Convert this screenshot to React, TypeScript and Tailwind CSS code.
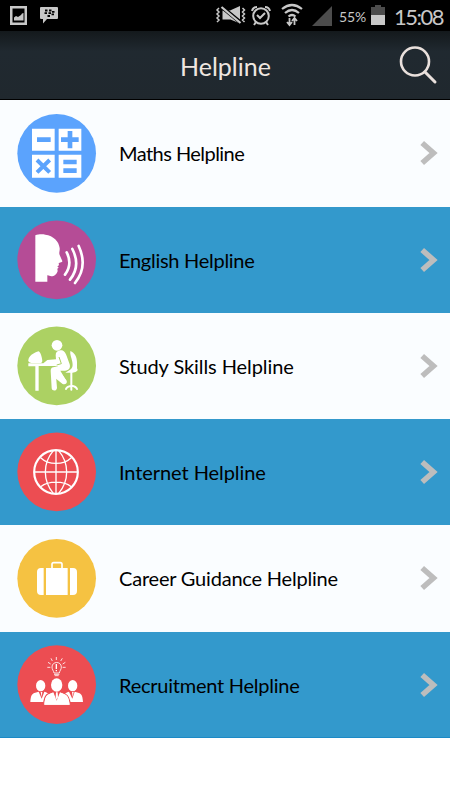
import React from "react";

type Row = {
  label: string;
  text: string;
  row: string;
  disc: string;
  art: React.ReactNode;
};

const maths = (
  <g>
    <path fill="#fff" d="M66 71h68v66H66zM146 71h68v66h-68zM66 149h68v69H66zM146 149h68v69h-68z" />
    <path stroke="#5ba3fd" strokeWidth="14" d="M81 104h41M153 104h53M180 78v52M160 171h40M160 197h40" />
    <path stroke="#5ba3fd" strokeWidth="12" d="M81 165l38 37M119 165l-38 37" />
  </g>
);

const english = (
  <g>
    <path
      fill="#fff"
      d="M76 70C84 67 96 66 106 68C130 71 147 88 149 108C150 118 146 122 149 129L157 147C158 151 150 151 146 153L147 160L142 163L146 167L142 170L143 177C141 186 133 193 124 193C119 192 115 189 112 190V209H76z"
    />
    <path
      fill="none"
      stroke="#fff"
      strokeWidth="8"
      strokeLinecap="round"
      d="M170 121C182 144 180 168 165 188M187 111C205 146 202 176 180 203M206 102C225 143 221 181 195 213"
    />
  </g>
);

const study = (
  <g fill="#fff">
    <circle cx="141" cy="82" r="16" />
    <path d="M55 127C55 114 73 103 86 100C91 102 96 116 97 130L94 135H64C57 134 55 132 55 127z" />
    <path d="M55 136H100L112 126L138 124L137 112C137 102 143 98 150 97C161 95 166 103 170 114L179 139C182 149 177 158 165 158H151L168 187C171 194 163 199 158 196L138 174L141 210C140 220 126 220 125 211L122 158C122 150 127 147 134 147L145 144H86V218H76V145H55z" />
    <path d="M181 99C194 104 201 117 201 132V151L203 155C202 161 193 164 184 164H166L178 157C188 151 189 144 187 132C185 120 179 109 181 99z" />
    <path d="M138 166L150 162L170 188C173 196 164 202 157 197L138 182z" />
    <path
      fill="none"
      stroke="#fff"
      strokeWidth="6"
      strokeLinecap="round"
      d="M184 160V215M168 213C170 206 179 204 184 203C192 204 199 207 201 213"
    />
    <path fill="none" stroke="#acd163" strokeWidth="3" d="M147 117L154 137L140 141" />
  </g>
);

const globe = (
  <g fill="none" stroke="#fff" strokeWidth="4">
    <circle cx="138" cy="144" r="65.500" strokeWidth="6.500" />
    <path d="M138 80v128M74 144h128M92 101C116 124 160 124 184 101M92 188C116 170 160 170 184 188" />
    <path d="M130 80C98 118 98 170 130 208M146 80C178 118 178 170 146 208" />
  </g>
);

const suitcase = (
  <g fill="#fff">
    <path d="M101 114v81h-8Q81 195 81 183V126Q81 114 93 114zM108 114h65v81h-65zM180 114h9q12 0 12 12v57q0 12-12 12h-9z" />
    <path fill="none" stroke="#fff" strokeWidth="5" d="M126 116V103q0-5 5-5h20q5 0 5 5v13" />
  </g>
);

const recruitment = (
  <g fill="#fff">
    <ellipse cx="92" cy="149" rx="14" ry="17" />
    <ellipse cx="188" cy="149" rx="14" ry="17" />
    <path d="M61 198C62 183 64 174 73 171L86 167L95 188L103 167C110 169 115 171 117 176L106 198zM219 198C218 183 216 174 207 171L194 167L187 188L177 167C170 169 165 171 163 176L174 198z" />
    <path
      stroke="#ec4d52"
      strokeWidth="4"
      d="M101 208C102 187 106 177 115 174L130 167L140 194L150 167L165 174C175 178 179 187 181 208z"
    />
    <path d="M103 206C104 187 108 178 116 175L130 169L140 194L150 169L164 175C173 178 177 187 179 206z" />
    <ellipse cx="140" cy="147" rx="17" ry="20" />
    <path d="M92 168h5l-2 15zM186 168h5l-3 15zM138 169h5l1 15-4 8-3-8z" />
    <path
      fill="none"
      stroke="#fff"
      strokeWidth="2.500"
      d="M132 111C131 104 126 101 126 93C126 75 154 75 154 93C154 101 149 104 148 111zM132 115h16M134 119h12M139 63v9M123 67l4 8M157 67l-5 8M114 79l8 5M166 79l-8 5M112 94h9M158 94h9"
    />
    <path stroke="#fff" strokeWidth="4" d="M139 84v15M139 102v4" />
  </g>
);

const rows: Row[] = [
  { label: "Maths Helpline", text: "tracking-[-0.55px]", row: "h-[107px] bg-[#fafdff]", disc: "#5ba3fd", art: maths },
  { label: "English Helpline", text: "tracking-[-0.28px]", row: "h-[106px] bg-[#3399cc]", disc: "#b54c96", art: english },
  { label: "Study Skills Helpline", text: "tracking-[-0.08px]", row: "h-[106px] bg-[#fafdff]", disc: "#acd163", art: study },
  { label: "Internet Helpline", text: "tracking-[-0.08px]", row: "h-[106px] bg-[#3399cc]", disc: "#ec4d52", art: globe },
  { label: "Career Guidance Helpline", text: "tracking-[-0.2px]", row: "h-[107px] bg-[#fafdff]", disc: "#f5c242", art: suitcase },
  { label: "Recruitment Helpline", text: "tracking-[-0.24px]", row: "h-[106px] border-b border-[#1c8ac6] bg-[#3399cc]", disc: "#ec4d52", art: recruitment },
];

function StatusBar() {
  return (
    <div className="flex h-[31px] items-center bg-black text-[#c8c8c8]">
      <svg className="ml-[10px] h-[19px] w-[17px]" viewBox="0 0 17 19">
        <path fill="#c8c8c8" fillRule="evenodd" d="M0 0h17v19H0zM2.500 2.500v14h12v-14z" />
        <path fill="#c8c8c8" d="M4 14.500V11.500l2-1.500 2 1 3-2 1-1.500 1.500-.5v7.500z" />
      </svg>
      <svg className="ml-[13px] h-[17px] w-[18px]" viewBox="0 0 18 17">
        <path fill="#c8c8c8" d="M1 0h16q1 0 1 1v10q0 1-1 1H7l-4 4.500V12H1q-1 0-1-1V1q0-1 1-1z" />
        <path
          stroke="#000"
          strokeWidth="1.800"
          d="M5 3.500h2.500M9 3.500h2.500M4.500 6.200h2.500M8.500 6.200h2.500M12 4.800h2.500M11.500 7.300h2.500M7.500 9h2.500"
        />
      </svg>
      <svg className="ml-auto h-[31px] w-[138px]" viewBox="200 0 138 31" fill="none" stroke="#c8c8c8">
        <path fill="#c8c8c8" stroke="none" d="M222.500 10.500h7.500l10-4.500v17.500l-9.500-4H222.500z" />
        <path stroke="#000" strokeWidth="4" d="M220 5.500l23 19" />
        <path strokeWidth="2.200" d="M221.500 7l19 16" />
        <path strokeWidth="1.500" d="M219 8l-2 2 2 2-2 2 2 2-2 2 2 2-2 2M242.500 8l2 2-2 2 2 2-2 2 2 2-2 2 2 2" />
        <circle cx="261" cy="16" r="7.800" strokeWidth="2" />
        <path strokeWidth="2" d="M257 15l3 3 5-5M256 22l-2 3M266 22l2 3M252 11q1-4 5-4M270 11q-1-4-5-4" />
        <path strokeWidth="2.200" d="M282 9q10-8 20 0M285 13q7-6 14 0M288.500 16.500q3.500-3 7 0" />
        <path strokeWidth="1.800" d="M289.500 18v7M294.500 25v-6M287 22l2.500 3 2.500-3M292 21l2.500-3 2.500 3" />
        <path fill="#4c4c4c" stroke="none" d="M332 6v20h-20z" />
      </svg>
      <span className="mt-[3px] w-[33px] pl-px text-[14px] leading-[20px] tracking-[-0.1px]">55%</span>
      <svg className="h-[31px] w-[14px]" viewBox="371 0 14 31">
        <path fill="#4c4c4c" d="M371 7h4V5h6v2h4v9h-14z" />
        <path fill="#c8c8c8" d="M371 15h14v10h-14z" />
      </svg>
      <span className="mt-[3px] w-[65px] pl-[9px] text-[22px] leading-[26px] tracking-[-1.5px] whitespace-nowrap">
        15:08
      </span>
    </div>
  );
}

export default function App() {
  return (
    <div className="h-[800px] w-[450px] overflow-hidden bg-white font-['Lato',sans-serif]">
      <StatusBar />
      <header className="grid h-[69px] grid-cols-[1fr_90px_1fr] items-center border-b border-black bg-linear-to-b from-[#14191c] via-[#202930] via-30% to-[#20282e]">
        <span />
        <h1 className="mt-[2px] text-center text-[25px] leading-[30px] whitespace-nowrap text-[#efe6e0]">Helpline</h1>
        <svg className="mr-[12px] h-[40px] w-[40px] justify-self-end" viewBox="398 45 40 40" fill="none" stroke="#e9e0dc">
          <circle cx="415" cy="61.500" r="14" strokeWidth="2.600" />
          <path strokeWidth="3" strokeLinecap="round" d="M425 72l10 10" />
        </svg>
      </header>
      <main>
        {rows.map((r, i) => (
          <section key={r.label} className={`flex items-start pt-[13px] pl-[17px] ${r.row}`}>
            <svg className="h-[80px] w-[80px] shrink-0" viewBox={i === 5 ? "21 27 240 240" : "21 24 240 240"}>
              <circle cx="140" cy={i === 5 ? 146 : i === 0 || i === 4 ? 145 : 143.5} r="118" fill={r.disc} />
              {r.art}
            </svg>
            <h2 className={`mt-[26px] ml-[22px] text-[20px] leading-[28px] whitespace-nowrap text-black ${r.text}`}>
              {r.label}
            </h2>
            <svg className="mt-[26px] mr-[12px] ml-auto h-[28px] w-[18px]" viewBox="0 0 18 28">
              <path fill="none" stroke="#bdbdbd" strokeWidth="5.500" d="M2.200 4L13.500 14L2.200 24" />
            </svg>
          </section>
        ))}
      </main>
    </div>
  );
}
